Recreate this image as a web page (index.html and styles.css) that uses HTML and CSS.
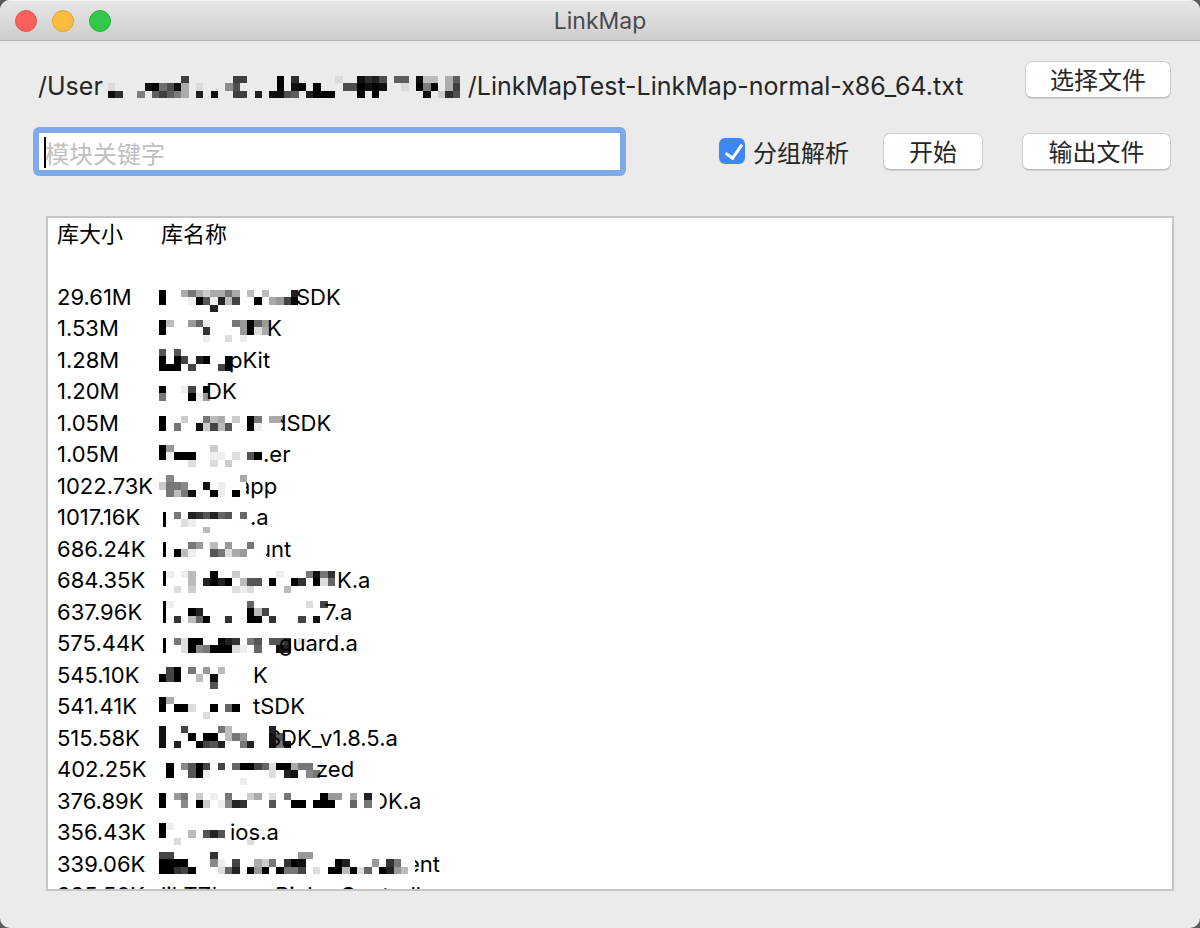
FILE: index.html
```html
<!DOCTYPE html>
<html lang="zh-CN">
<head>
<meta charset="UTF-8" />
<meta name="viewport" content="width=device-width, initial-scale=1" />
<title>LinkMap</title>
<link rel="stylesheet" href="styles.css">
</head>
<body>

<div class="window">

  <header class="titlebar">
    <div class="lights">
      <span class="light red"></span>
      <span class="light yellow"></span>
      <span class="light green"></span>
    </div>
    <h1>LinkMap</h1>
  </header>

  <main>
    <div class="path-row">
      <p class="path">/User<svg class="mosaic" width="365" height="50" data-top="15" data-left="5" data-cells="..........b......bb....f.c.....1..ecda.99.e33.49 1....ef8ae4.1...6a.....f.ef.f...aafefe..1.f7f.4b ec..7.9b974.d.e..bb.d.eea9.dfff...f.f......e.2ca"></svg>/LinkMapTest-LinkMap-normal-x86_64.txt</p>
      <button type="button" class="choose">选择文件</button>
    </div>

    <form class="search-row">
      <input type="text" class="keyword" placeholder="模块关键字" aria-label="模块关键字" />
      <label class="group"><input type="checkbox" checked />分组解析</label>
      <button type="button" class="start">开始</button>
      <button type="button" class="export">输出文件</button>
    </form>

    <div class="result">
      <table>
        <thead>
          <tr><th class="size">库大小</th><th class="name">库名称</th></tr>
        </thead>
        <tbody>
          <tr><td></td><td></td></tr>
          <tr><td>29.61M</td><td><svg class="mosaic" width="137" height="31" data-top="9" data-cells="f..58535585.4.4...d f...1fa1d4b..f.56bf .......d"></svg>SDK</td></tr>
          <tr><td>1.53M</td><td><svg class="mosaic" width="108" height="31" data-top="8" data-cells="f4..691...86f96 f.....c....6f25 ......1..2.1"></svg>K</td></tr>
          <tr><td>1.28M</td><td><svg class="mosaic" width="70" height="31" data-top="5" data-cells="a.a f.fb.df..f fff.b...bf"></svg>pKit</td></tr>
          <tr><td>1.20M</td><td><svg class="mosaic" width="47" height="31" data-top="11" data-cells="f..1b.f 8...f16"></svg>DK</td></tr>
          <tr><td>1.05M</td><td><svg class="mosaic cut" width="122" height="31" data-top="9" data-cells="f..3..845.3.f8.55 f.8..e3b4a..f1"></svg>dSDK</td></tr>
          <tr><td>1.05M</td><td><svg class="mosaic" width="104" height="31" data-top="7" data-cells="f6.....3 f1fff..11.2.af ....2..2.3"></svg>.er</td></tr>
          <tr><td>1022.73K</td><td><svg class="mosaic cut" width="87" height="31" data-top="5" data-cells=".7.........5 3887..e.1 .848e..f1.f"></svg>app</td></tr>
          <tr><td>1017.16K</td><td><svg class="mosaic" width="91" height="31" data-top="11" data-cells="h.8.dcad9a.9 h..21 ......4"></svg>.a</td></tr>
          <tr><td>686.24K</td><td><svg class="mosaic cut" width="107" height="31" data-top="9" data-cells="h...86.4.6..8 h.f41..a8256"></svg>unt</td></tr>
          <tr><td>684.35K</td><td><svg class="mosaic" width="178" height="31" data-top="7" data-cells="h1.14..f..3.....1...8e8c h...4.dfdf.4aa.f..fc.f29 ..2.3.....212....4"></svg>K.a</td></tr>
          <tr><td>637.96K</td><td><svg class="mosaic" width="165" height="31" data-top="5" data-cells="h1..........9.......2.b h...fd......f4b h.c.49f..c..ff.c...b.e"></svg>7.a</td></tr>
          <tr><td>575.44K</td><td><svg class="mosaic" width="120" height="31" data-top="11" data-cells="h.82ff..fdc.8a.aac.2 h..2f78fff21.9..ed"></svg>guard.a</td></tr>
          <tr><td>545.10K</td><td><svg class="mosaic" width="94" height="31" data-top="8" data-cells=".bf.8.6.4 fbf..4.e .......a"></svg>K</td></tr>
          <tr><td>541.41K</td><td><svg class="mosaic" width="94" height="31" data-top="7" data-cells="f5 f.ff2..f.9f ......2"></svg>tSDK</td></tr>
          <tr><td>515.58K</td><td><svg class="mosaic cut" width="116" height="31" data-top="4" data-cells="e..b....84.....d e...f.ff.486...ea e.d..fbad..8d..e8e"></svg>SDK_v1.8.5.a</td></tr>
          <tr><td>402.25K</td><td><svg class="mosaic" width="157" height="31" data-top="10" data-cells=".f.7afb.b.9ffb92ff588 .f..af1........2.de.78 ...........1"></svg>zed</td></tr>
          <tr><td>376.89K</td><td><svg class="mosaic cut" width="221" height="31" data-top="8" data-cells="f.68.3.1.8..35.2.8....f66.5.d f..7.f3.17dc...a..ff.fff..9.8"></svg>DK.a</td></tr>
          <tr><td>356.43K</td><td><svg class="mosaic" width="71" height="31" data-top="7" data-cells="f1 f...4.ada ..2.........2"></svg>ios.a</td></tr>
          <tr><td>339.06K</td><td><svg class="mosaic cut" width="256" height="31" data-top="4" data-cells="bb.....c...........66 ffff...71.b..538.cfe....fd...6.c8 ffcbf...29d.f6f.f88b.2.ff4f29.fd64"></svg>ent</td></tr>
          <tr><td>335.56K</td><td class="name">libTZImagePickerController</td></tr>
        </tbody>
      </table>
    </div>
  </main>

</div>

<script src="script.js"></script>
</body>
</html>
```

FILE: styles.css
```css
* {
  box-sizing: border-box;
}

body {
  font-family: Inter, "Noto Sans CJK SC", sans-serif;
  font-size: 24px;
  color: #262626;
  background-color: #5a5a5e;
  margin: 0;
}

.window {
  display: flex;
  flex-direction: column;
  height: 100vh;
  background-color: #ebebeb;
  border-radius: 10px;
  overflow: hidden;
}

.titlebar {
  display: grid;
  grid-template-columns: 1fr auto 1fr;
  align-items: center;
  height: 41px;
  padding: 0 15px;
  background: linear-gradient(#e6e6e6, #cecece);
  border-top: 1px solid #f4f4f4;
  border-bottom: 1px solid #b4b4b4;
}

.titlebar h1 {
  margin: 0;
  font-size: 23px;
  font-weight: normal;
  color: #4a4a4a;
}

.lights {
  display: flex;
  gap: 15px;
}

.light {
  width: 22px;
  height: 22px;
  border-radius: 50%;
  border: 1px solid;
}

.red {
  background-color: #fc605c;
  border-color: #e2524d;
}

.yellow {
  background-color: #fdbc40;
  border-color: #e0a336;
}

.green {
  background-color: #34c84a;
  border-color: #2bae3b;
}

main {
  display: flex;
  flex-direction: column;
  flex: 1;
  min-height: 0;
  padding: 20px 26px 37px 33px;
}

.path-row {
  display: flex;
  align-items: flex-start;
  justify-content: space-between;
  padding: 0 3px 0 5px;
}

.path {
  margin: 0;
  font-size: 25px;
  line-height: 50px;
  white-space: nowrap;
}

button {
  height: 37px;
  padding: 2px 0 0;
  font: inherit;
  line-height: 33px;
  color: #262626;
  background-color: #fff;
  border: 1px solid #d0d0d0;
  border-bottom-color: #b8b8b8;
  border-radius: 7px;
  box-shadow: 0 1px 1px rgba(0,0,0,0.1);
}

.choose {
  width: 146px;
}

.search-row {
  display: flex;
  align-items: center;
  margin-top: 16px;
  padding-right: 3px;
}

.keyword {
  flex: 1;
  min-width: 0;
  height: 49px;
  padding: 5px 6px 0;
  font: inherit;
  border: 6px solid #7eaaec;
  border-radius: 6px;
  /* text cursor */
  background: linear-gradient(#000, #000) 5px 4px / 2px 31px no-repeat #fff;
  outline: none;
}

.keyword::placeholder {
  color: #bfbfbf;
}

.group {
  display: flex;
  align-items: center;
  gap: 8px;
  height: 49px;
  margin-left: 93px;
  line-height: 49px;
  padding-top: 3px;
}

.group input {
  appearance: none;
  position: relative;
  width: 26px;
  height: 26px;
  margin: 0 0 5px;
  border-radius: 6px;
  background-color: #3f87f7;
}

.group input:checked::after {
  content: "";
  position: absolute;
  left: 10px;
  top: 3px;
  width: 7px;
  height: 15px;
  border: solid #fff;
  border-width: 0 3px 3px 0;
  transform: rotate(35deg);
}

.start {
  width: 100px;
  margin-left: 34px;
}

.export {
  width: 149px;
  margin-left: 39px;
}

.result {
  flex: 1;
  min-height: 0;
  margin: 40px 0 0 13px;
  padding: 1px 0 0 9px;
  font-size: 22px;
  color: #000;
  background-color: #fff;
  border: 2px solid #c6c6c6;
  overflow: auto;
  scrollbar-width: none;
}

table {
  border-collapse: collapse;
  line-height: 31px;
  white-space: nowrap;
}

tr {
  height: 31px;
}

tbody tr:nth-child(odd) {
  height: 32px;
}

th,
td {
  padding: 0;
  font-weight: normal;
  text-align: left;
  vertical-align: top;
}

.size {
  width: 102px;
}

.name {
  padding-left: 2px;
}

.mosaic {
  position: relative;
  vertical-align: top;
  overflow: visible;
}

.result .mosaic {
  margin-top: -1px;
  background-color: #fff;
}

/* covers the start of the text that follows */
.cut {
  margin-right: -8px;
}
```

FILE: script.js
```javascript
// Each hex digit is the darkness of one block, "." is empty, "h" is a half block
const CELL = 22 / 3;

document.querySelectorAll('.mosaic').forEach(svg => {
  const top = Number(svg.dataset.top);
  const left = Number(svg.dataset.left || 0);

  svg.dataset.cells.split(' ').forEach((row, y) => {
    [...row].forEach((cell, x) => {
      if (cell === '.') return;
      const half = cell === 'h';
      const rect = document.createElementNS('http://www.w3.org/2000/svg', 'rect');
      rect.setAttribute('x', left + x * CELL + (half ? CELL / 2 : 0));
      rect.setAttribute('y', top + y * CELL);
      rect.setAttribute('width', half ? CELL / 2 : CELL);
      rect.setAttribute('height', CELL);
      rect.setAttribute('fill-opacity', half ? 1 : parseInt(cell, 16) / 15);
      rect.setAttribute('shape-rendering', 'crispEdges');
      svg.appendChild(rect);
    });
  });
});
```
